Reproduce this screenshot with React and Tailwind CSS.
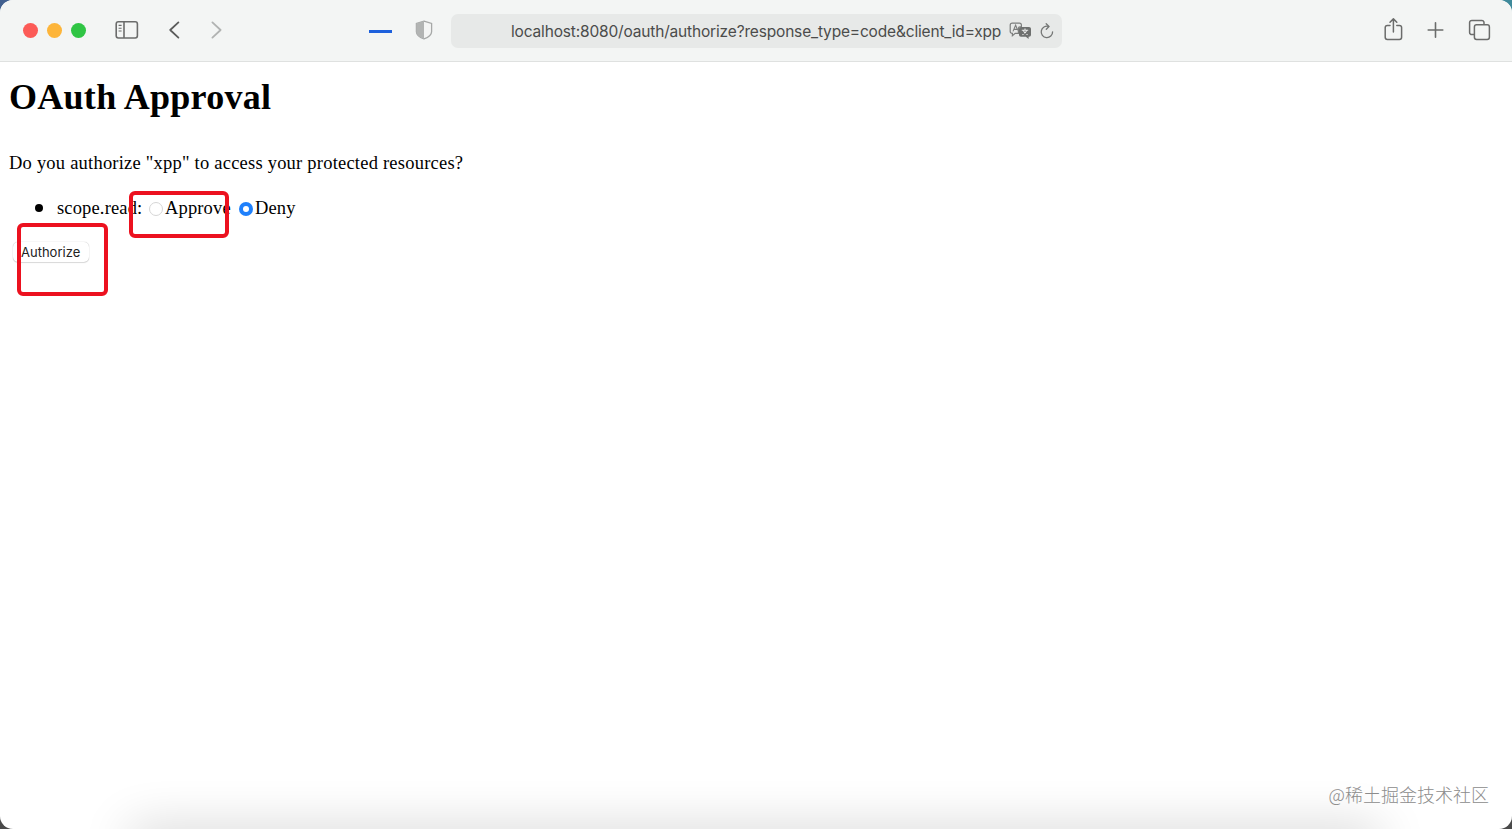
function SidebarIcon() {
  return (
    <svg width="24" height="20" viewBox="0 0 24 20" fill="none" stroke="#6b6c6b" strokeWidth="1.6">
      <rect x="1.2" y="1.8" width="21.2" height="16.2" rx="2.2" />
      <path d="M9 1.8v16.2" />
      <path d="M3.6 5.4h3M3.6 8.2h3M3.6 11h3" strokeWidth="1.1" />
    </svg>
  );
}

function ShieldIcon() {
  return (
    <svg width="18" height="20" viewBox="0 0 18 20">
      <path d="M9 1.1 16.6 3.5v8.2c0 3.3-3.4 5.600-7.600 7.200-4.200-1.600-7.600-3.900-7.600-7.200V3.500z" fill="#f4f5f4" stroke="#a6a8a7" strokeWidth="1.300" />
      <path d="M9 1.100v17.800c-4.200-1.600-7.600-3.900-7.600-7.200V3.500z" fill="#b2b4b3" />
    </svg>
  );
}

function TranslateIcon() {
  return (
    <svg width="23" height="18" viewBox="0 0 23 18" fill="none">
      <path d="M3.2 1.2h7.2c1.2 0 2 .8 2 2v1.6H11c-1 0-1.6.7-1.6 1.6v5H6.2l-2.8 2.4v-2.4h-.2c-1.2 0-2-.8-2-2V3.2c0-1.2.8-2 2-2z" stroke="#7c7e7d" strokeWidth="1.2" />
      <path d="m4 9.400 2.600-6.200 2.200 5M4.900 7.400h3.400" stroke="#7c7e7d" strokeWidth="1.1" />
      <path d="M12 5h8c1.2 0 2 .8 2 2v5.800c0 1.2-.8 2-2 2h-.4V17l-2.800-2.200H12c-1.2 0-2-.8-2-2V7c0-1.2.8-2 2-2z" fill="#6e706f" />
      <path d="M12.800 8.200h6.400M16 6.600v1.600M17.800 8.400c-.8 2-2.200 3.400-4.400 4.400M14.200 8.400c.8 2 2.200 3.400 4.400 4.400" stroke="#e8e9e8" strokeWidth="1.1" />
    </svg>
  );
}

function ReloadIcon() {
  return (
    <svg width="14" height="16" viewBox="0 0 14 16" fill="none" stroke="#747675" strokeWidth="1.3" strokeLinecap="round" strokeLinejoin="round">
      <path d="M12.6 8.8A5.700 5.700 0 1 1 8.600 3.500" />
      <path d="M6.200.8 9 3.500 6.300 6.200" />
    </svg>
  );
}

function Toolbar() {
  return (
    <header className="flex h-[62px] shrink-0 items-start border-b border-[#dfe1e0] bg-[#f3f5f4]">
      <div className="ml-[23px] mt-[23px] flex gap-[9px]">
        <span className="size-[15px] rounded-full bg-[#fc5b57]" />
        <span className="size-[15px] rounded-full bg-[#fdb53a]" />
        <span className="size-[15px] rounded-full bg-[#2fc544]" />
      </div>
      <div className="ml-[29px] mt-5"><SidebarIcon /></div>
      <svg className="ml-[29px] mt-5" width="14" height="20" viewBox="0 0 14 20" fill="none" stroke="#5b5c5b" strokeWidth="1.8" strokeLinecap="round" strokeLinejoin="round">
        <path d="M10.400 2.400 2.200 10l8.200 7.600" />
      </svg>
      <svg className="ml-[27px] mt-5" width="14" height="20" viewBox="0 0 14 20" fill="none" stroke="#b1b3b2" strokeWidth="1.8" strokeLinecap="round" strokeLinejoin="round">
        <path d="M3.400 2.400 11.600 10l-8.200 7.600" />
      </svg>
      <span className="ml-[146px] mt-[30px] h-[2.5px] w-[23px] bg-[#1d60dc]" />
      <div className="ml-[23px] mt-5"><ShieldIcon /></div>
      <div className="ml-[18px] mt-[14px] flex h-[34px] w-[611px] items-center rounded-[7px] bg-[#e7e9e8] pl-[60px]">
        <span className="mt-[2px] w-[491px] whitespace-nowrap font-[Inter,sans-serif] text-[15.5px] tracking-[-0.17px] text-[#4b4c4b]">
          localhost:8080/oauth/authorize?response_type=code&amp;client_id=xpp
        </span>
        <span className="ml-[7px]"><TranslateIcon /></span>
        <span className="ml-[8px]"><ReloadIcon /></span>
      </div>
      <svg className="ml-auto mt-[17px]" width="20" height="25" viewBox="0 0 20 25" fill="none" stroke="#6b6c6b" strokeWidth="1.5" strokeLinecap="round" strokeLinejoin="round">
        <path d="M7 8.400H4.400a2.200 2.200 0 0 0-2.200 2.200v9.600a2.200 2.200 0 0 0 2.200 2.200h12a2.200 2.200 0 0 0 2.200-2.200v-9.600a2.200 2.200 0 0 0-2.200-2.200h-2.600" />
        <path d="M10.400 15V2M7 5.200l3.400-3.300 3.400 3.300" />
      </svg>
      <svg className="ml-[24px] mt-[22px]" width="17" height="16" viewBox="0 0 17 16" stroke="#6b6c6b" strokeWidth="1.6" strokeLinecap="round">
        <path d="M8.500.8v14.400M1.200 8h14.600" />
      </svg>
      <svg className="ml-[24px] mr-[21px] mt-[19px]" width="23" height="22" viewBox="0 0 23 22" fill="none" stroke="#6b6c6b" strokeWidth="1.5">
        <path d="M6.200 15.600H3.800a2.200 2.200 0 0 1-2.200-2.200V3.600a2.200 2.200 0 0 1 2.200-2.200h10a2.200 2.200 0 0 1 2.200 2.200v2" />
        <rect x="6.4" y="5.8" width="15" height="14.6" rx="2.2" />
      </svg>
    </header>
  );
}

function ApprovalForm() {
  return (
    <main className="relative flex-1 pl-[9px] font-['Liberation_Serif',serif] text-black">
      <h1 className="pt-[15px] text-[36px] leading-[40px] font-bold tracking-[0.28px]">
        <span>OAuth Approval</span>
      </h1>
      <p className="mt-[34px] text-[18.5px] leading-6 tracking-[0.22px]">
        <span>Do you authorize "xpp" to access your protected resources?</span>
      </p>
      <ul className="mt-[21px]">
        <li className="flex h-6 items-center text-[18.5px] leading-6 tracking-[0.15px]">
          <span className="ml-[26px] size-[8px] rounded-full bg-black" />
          <span className="ml-[14px] w-[92px] whitespace-nowrap">scope.read:</span>
          <label className="flex w-[90px] items-center">
            <span className="mt-[2px] size-[14px] rounded-full border border-[#d6d6d6] bg-white" />
            <span className="ml-[2px]">Approve</span>
          </label>
          <label className="flex items-center">
            <span className="mt-[2px] flex size-[14px] items-center justify-center rounded-full bg-[#1f80fb]">
              <span className="size-[6px] rounded-full bg-white" />
            </span>
            <span className="ml-[2px]">Deny</span>
          </label>
        </li>
      </ul>
      <button className="ml-[4px] mt-[22px] flex h-5 w-[76px] items-center rounded-[5px] bg-white pt-[2px] pl-[8px] font-[Inter,sans-serif] text-[13px] text-[#222] shadow-[0_0_1px_#aaa,0_1px_1px_#ddd]">
        Authorize
      </button>
      {/* highlight boxes */}
      <span className="absolute left-[129px] top-[129px] h-[47px] w-[100px] rounded-[6px] border-4 border-[#ec111f]" />
      <span className="absolute left-[17px] top-[161px] h-[73px] w-[91px] rounded-[6px] border-4 border-[#ec111f]" />
    </main>
  );
}

export default function App() {
  return (
    <div className="h-[829px] w-[1512px] overflow-hidden bg-[linear-gradient(transparent_50%,#4a4a4a_50%),linear-gradient(90deg,#41608f_50%,#3f8a9b_50%)]">
      <div className="relative flex h-full flex-col overflow-hidden rounded-[13px] bg-white">
        <Toolbar />
        <ApprovalForm />
        <div className="absolute bottom-[-30px] left-[130px] h-[30px] w-[1250px] shadow-[0_0_50px_rgba(0,0,0,0.2)]" />
        <span className="absolute right-[23px] bottom-[22px] font-['Noto_Sans_CJK_SC',sans-serif] text-[18px] leading-[26px] font-light whitespace-nowrap text-[#8c8c8c]">
          @稀土掘金技术社区
        </span>
      </div>
    </div>
  );
}
